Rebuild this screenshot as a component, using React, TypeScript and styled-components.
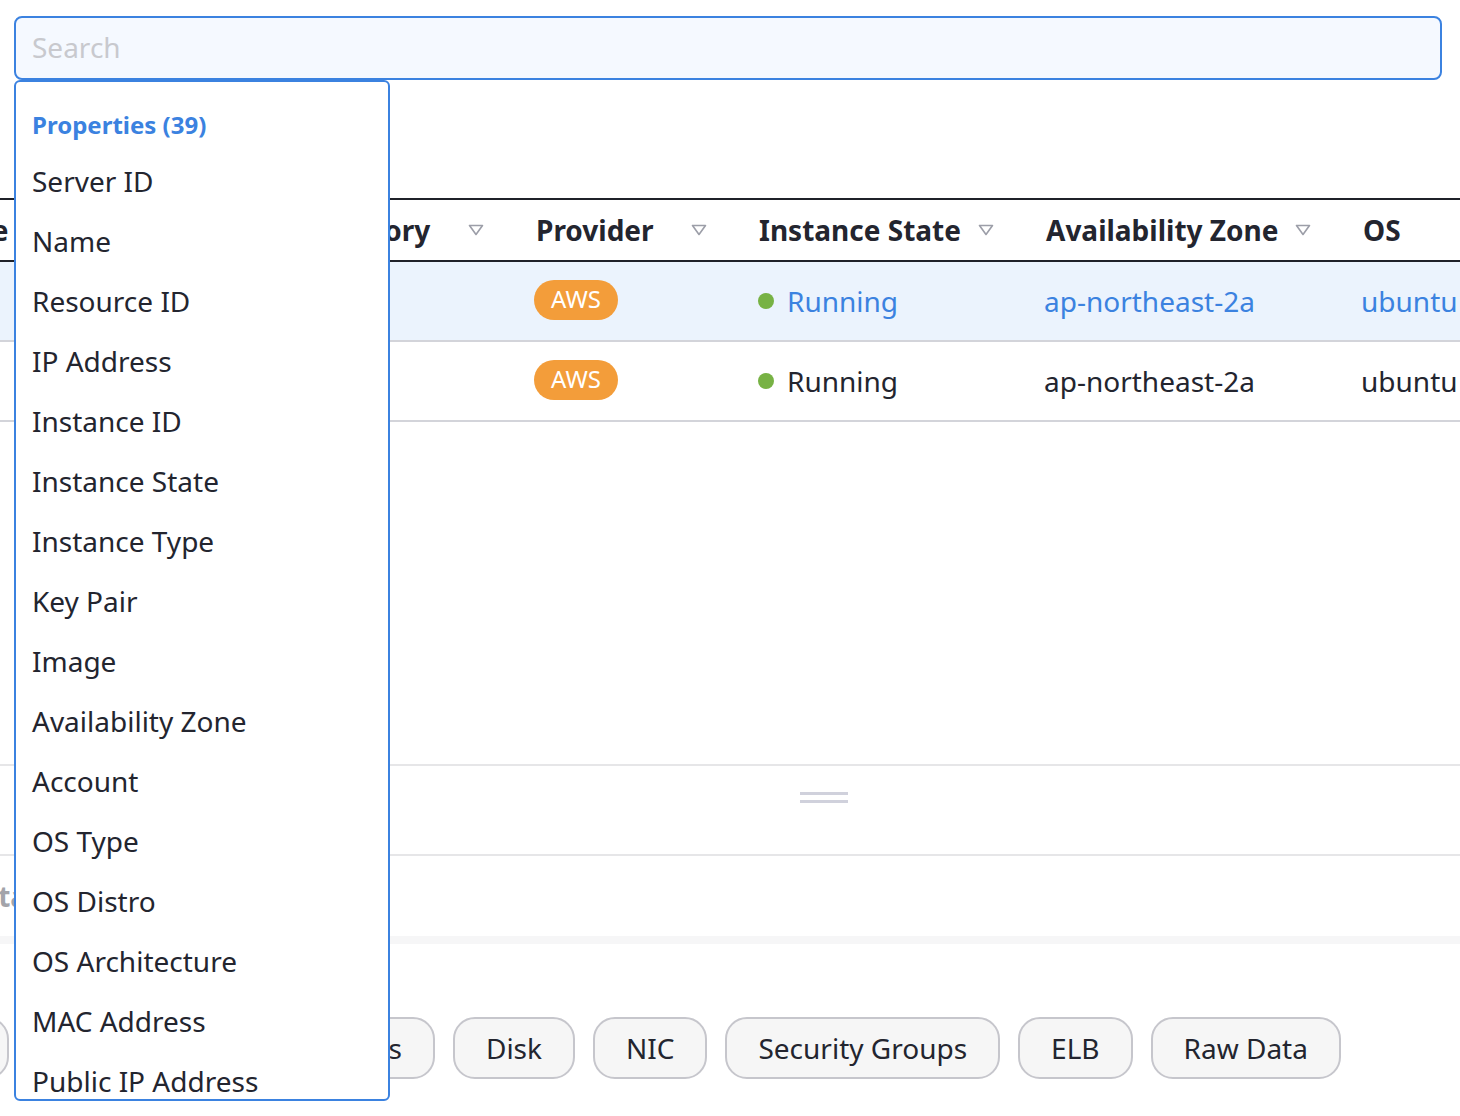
import React from 'react';
import styled, { createGlobalStyle } from 'styled-components';

const GlobalStyle = createGlobalStyle`
  html, body {
    margin: 0;
    padding: 0;
    background: #ffffff;
  }
  body {
    font-family: 'Noto Sans', 'Open Sans', sans-serif;
    color: #23252f;
  }
  * {
    box-sizing: border-box;
  }
`;

const properties = [
  'Server ID',
  'Name',
  'Resource ID',
  'IP Address',
  'Instance ID',
  'Instance State',
  'Instance Type',
  'Key Pair',
  'Image',
  'Availability Zone',
  'Account',
  'OS Type',
  'OS Distro',
  'OS Architecture',
  'MAC Address',
  'Public IP Address',
  'Private IP Address',
];

const columns = [
  { key: 'select', label: '', filter: false },
  { key: 'name', label: 'Name', filter: true },
  { key: 'category', label: 'Category', filter: true },
  { key: 'provider', label: 'Provider', filter: true },
  { key: 'state', label: 'Instance State', filter: true },
  { key: 'zone', label: 'Availability Zone', filter: true },
  { key: 'os', label: 'OS', filter: false },
  { key: 'rest', label: '', filter: false },
];

const gridTemplate = '107px 378px 233px 223px 287px 317px 260px 1fr';

const rows = [
  { id: 1, selected: true, provider: 'AWS', state: 'Running', zone: 'ap-northeast-2a', os: 'ubuntu' },
  { id: 2, selected: false, provider: 'AWS', state: 'Running', zone: 'ap-northeast-2a', os: 'ubuntu' },
];

const tabs = ['Summary', 'Instance Storage Volumes', 'Disk', 'NIC', 'Security Groups', 'ELB', 'Raw Data'];

const FilterIcon: React.FC = () => (
  <svg width="16" height="12" viewBox="0 0 16 12" fill="none">
    <path d="M1.5 1.5 H14.5 L8 10.5 Z" stroke="#9c9ea8" strokeWidth="1.6" strokeLinejoin="round" />
  </svg>
);

const App: React.FC = () => (
  <>
    <GlobalStyle />
    <Page>
      <SearchWrap>
        <SearchInput placeholder="Search" />
        <Dropdown>
          <GroupTitle>Properties (39)</GroupTitle>
          {properties.map((p) => (
            <Option key={p}>{p}</Option>
          ))}
        </Dropdown>
      </SearchWrap>

      <ToolbarSpace />

      <Canvas>
        <TablePanel>
          <HeaderRow>
            {columns.map((c) => (
              <HeaderCell key={c.key}>
                {c.label}
                {c.filter && (
                  <FilterButton>
                    <FilterIcon />
                  </FilterButton>
                )}
              </HeaderCell>
            ))}
          </HeaderRow>
          {rows.map((r) => (
            <Row key={r.id} selected={r.selected}>
              <Cell />
              <Cell />
              <Cell />
              <Cell>
                <Badge>{r.provider}</Badge>
              </Cell>
              <Cell>
                <Dot />
                <CellText selected={r.selected}>{r.state}</CellText>
              </Cell>
              <Cell>
                <CellText selected={r.selected}>{r.zone}</CellText>
              </Cell>
              <Cell>
                <CellText selected={r.selected}>{r.os}</CellText>
              </Cell>
              <Cell />
            </Row>
          ))}
        </TablePanel>

        <Resizer>
          <Handle />
        </Resizer>

        <DetailsHeader>
          <DetailsTitle>Details</DetailsTitle>
        </DetailsHeader>
        <Band />

        <TabBar>
          {tabs.map((t) => (
            <Tab key={t}>{t}</Tab>
          ))}
        </TabBar>
      </Canvas>
    </Page>
  </>
);

const Page = styled.div`
  position: relative;
  width: 100%;
  height: 100vh;
  overflow: hidden;
`;

const SearchWrap = styled.div`
  position: relative;
  z-index: 2;
  padding: 16px 18px 0 14px;
`;

const SearchInput = styled.input`
  display: block;
  width: 100%;
  height: 64px;
  padding: 0 16px 3px;
  border: 2px solid #3b82e0;
  border-radius: 8px;
  background: #f5f9ff;
  font-family: 'Noto Sans', sans-serif;
  font-size: 28px;
  color: #23252f;
  outline: none;

  &::placeholder {
    color: #c8c9ce;
  }
`;

const Dropdown = styled.div`
  position: absolute;
  top: 80px;
  left: 14px;
  width: 376px;
  height: 1021px;
  padding-top: 16px;
  background: #ffffff;
  border: 2px solid #3b82e0;
  border-radius: 6px;
  overflow: hidden;
`;

const GroupTitle = styled.div`
  display: flex;
  align-items: center;
  height: 52px;
  padding-left: 16px;
  font-size: 24px;
  font-weight: 700;
  color: #3b82e0;
`;

const Option = styled.div`
  display: flex;
  align-items: center;
  height: 60px;
  padding: 1px 0 0 16px;
  font-size: 28px;
  color: #23252f;
  white-space: nowrap;
`;

const ToolbarSpace = styled.div`
  height: 118px;
`;

const Canvas = styled.div`
  width: 2048px;
  margin-left: -200px;
`;

const TablePanel = styled.div`
  height: 566px;
  border-top: 2px solid #1f2129;
`;

const HeaderRow = styled.div`
  display: grid;
  grid-template-columns: ${gridTemplate};
  height: 62px;
  border-bottom: 2px solid #1f2129;
`;

const HeaderCell = styled.div`
  display: flex;
  align-items: center;
  padding: 0 34px 0 18px;
  font-size: 28px;
  font-weight: 700;
  color: #23252f;
  white-space: nowrap;
`;

const FilterButton = styled.span`
  display: flex;
  margin-left: auto;
`;

const Row = styled.div<{ selected: boolean }>`
  display: grid;
  grid-template-columns: ${gridTemplate};
  height: 80px;
  background: ${({ selected }) => (selected ? '#ebf3fd' : '#ffffff')};
  border-bottom: 2px solid #d3d4da;
`;

const Cell = styled.div`
  display: flex;
  align-items: center;
  padding: 0 16px;
  white-space: nowrap;
`;

const CellText = styled.span<{ selected: boolean }>`
  font-size: 28px;
  color: ${({ selected }) => (selected ? '#3b82e0' : '#23252f')};
`;

const Badge = styled.span`
  display: inline-flex;
  align-items: center;
  height: 40px;
  margin-top: -3px;
  padding: 0 17px 2px;
  border-radius: 20px;
  background: #f39d3a;
  color: #ffffff;
  font-size: 24px;
`;

const Dot = styled.span`
  width: 16px;
  height: 16px;
  margin: 0 13px 0 1px;
  border-radius: 50%;
  background: #77b244;
`;

const Resizer = styled.div`
  display: flex;
  justify-content: center;
  height: 92px;
  padding-top: 26px;
  border-top: 2px solid #e6e6e8;
  border-bottom: 2px solid #e6e6e8;
`;

const Handle = styled.div`
  width: 48px;
  height: 11px;
  border-top: 3px solid #d0d1dc;
  border-bottom: 3px solid #d0d1dc;
`;

const DetailsHeader = styled.div`
  display: flex;
  align-items: center;
  height: 80px;
  padding-left: 161px;
`;

const DetailsTitle = styled.div`
  font-size: 28px;
  font-weight: 700;
  color: #a3a4aa;
`;

const Band = styled.div`
  height: 8px;
  background: #f6f6f7;
`;

const TabBar = styled.div`
  display: flex;
  gap: 18px;
  padding: 73px 0 0 16px;
`;

const Tab = styled.button`
  height: 62px;
  padding: 0 31px;
  border: 2px solid #c6c6cc;
  border-radius: 22px;
  background: #f6f6f6;
  font-family: 'Noto Sans', sans-serif;
  font-size: 28px;
  color: #23252f;
  white-space: nowrap;
`;

export default App;
